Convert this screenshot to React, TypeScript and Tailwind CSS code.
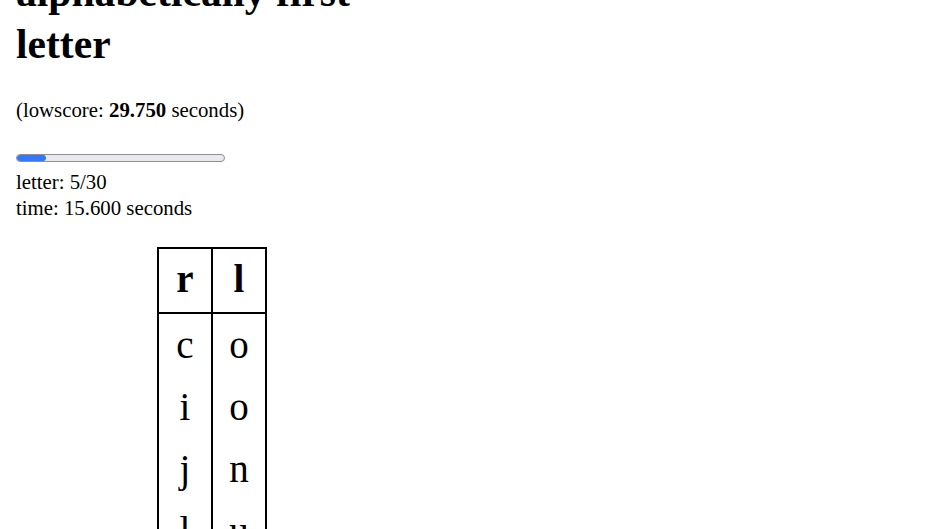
import React from "react";

const rows: [string, string][] = [
  ["c", "o"],
  ["i", "o"],
  ["j", "n"],
  ["l", "u"],
  ["e", "t"],
  ["s", "a"],
];

export default function App() {
  return (
    <div
      className="min-h-screen bg-white text-black pl-[16px] overflow-hidden"
      style={{ fontFamily: '"Liberation Serif", "Times New Roman", serif' }}
    >
      <h1 className="mt-[-34px] text-[41.6px] font-bold leading-[52px]">
        alphabetically first
        <br />
        letter
      </h1>
      <p className="mt-[27px] text-[20.8px] leading-[26px]">
        (lowscore: <b>29.750</b> seconds)
      </p>
      <div className="mt-[31px] w-[209px] h-[8px] rounded-full border border-[#8e8e93] bg-[#e9e9ee] overflow-hidden">
        <div className="h-full w-[29px] rounded-full bg-[#3478f6]" />
      </div>
      <p className="mt-[7px] text-[20.8px] leading-[26px]">letter: 5/30</p>
      <p className="text-[20.8px] leading-[26px]">time: 15.600 seconds</p>
      <div className="mt-[26px] ml-[141px] w-[110px] border-2 border-black text-[39px] leading-[44px]">
        <div className="flex border-b-2 border-black">
          <div className="w-[52px] pt-[8px] pb-[11px] text-center font-bold">r</div>
          <div className="w-[2px] bg-black" />
          <div className="w-[52px] pt-[8px] pb-[11px] text-center font-bold">l</div>
        </div>
        {rows.map(([a, b], i) => (
          <div key={i} className="flex h-[62px]">
            <div className="w-[52px] pt-[9px] text-center">{a}</div>
            <div className="w-[2px] bg-black" />
            <div className="w-[52px] pt-[9px] text-center">{b}</div>
          </div>
        ))}
      </div>
    </div>
  );
}
